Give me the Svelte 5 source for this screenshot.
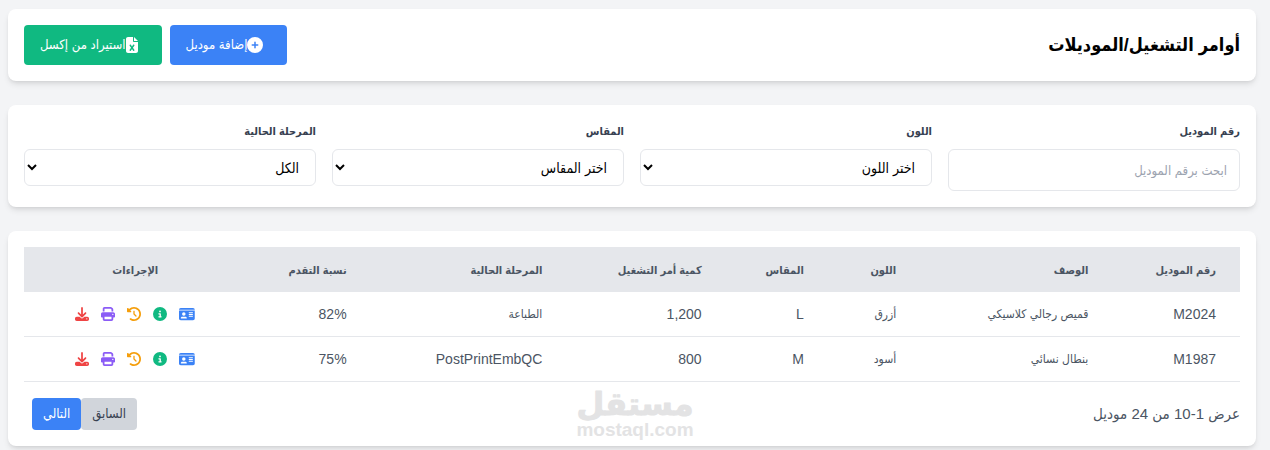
<script>
    const columns = [
        { label: "رقم الموديل", width: 10.5 },
        { label: "الوصف", width: 15.8 },
        { label: "اللون", width: 7.6 },
        { label: "المقاس", width: 8.4 },
        { label: "كمية أمر التشغيل", width: 13.1 },
        { label: "المرحلة الحالية", width: 16.1 },
        { label: "نسبة التقدم", width: 10.2 },
        { label: "الإجراءات", width: 18.3 },
    ];

    const orders = [
        {
            model: "M2024",
            description: "قميص رجالي كلاسيكي",
            color: "أزرق",
            size: "L",
            quantity: 1200,
            stage: "الطباعة",
            progress: 82,
        },
        {
            model: "M1987",
            description: "بنطال نسائي",
            color: "أسود",
            size: "M",
            quantity: 800,
            stage: "PostPrintEmbQC",
            progress: 75,
        },
    ];

    const actions = [
        {
            name: "details",
            label: "بطاقة الموديل",
            viewBox: "0 0 576 512",
            path: "M0 96l576 0c0-35.3-28.7-64-64-64H64C28.7 32 0 60.7 0 96zm0 32V416c0 35.3 28.7 64 64 64H512c35.3 0 64-28.7 64-64V128H0zM64 405.3c0-29.5 23.9-53.3 53.3-53.3H234.7c29.5 0 53.3 23.9 53.3 53.3c0 5.9-4.8 10.7-10.7 10.7H74.7c-5.9 0-10.7-4.8-10.7-10.7zM176 192a64 64 0 1 1 0 128 64 64 0 1 1 0-128zm176 16c0-8.8 7.2-16 16-16H496c8.8 0 16 7.2 16 16s-7.2 16-16 16H368c-8.8 0-16-7.2-16-16zm0 64c0-8.8 7.2-16 16-16H496c8.8 0 16 7.2 16 16s-7.2 16-16 16H368c-8.8 0-16-7.2-16-16zm0 64c0-8.8 7.2-16 16-16H496c8.8 0 16 7.2 16 16s-7.2 16-16 16H368c-8.8 0-16-7.2-16-16z",
        },
        {
            name: "info",
            label: "التفاصيل",
            viewBox: "0 0 512 512",
            path: "M256 512A256 256 0 1 0 256 0a256 256 0 1 0 0 512zM216 336h24V272H216c-13.3 0-24-10.7-24-24s10.7-24 24-24h48c13.3 0 24 10.7 24 24v88h8c13.3 0 24 10.7 24 24s-10.7 24-24 24H216c-13.3 0-24-10.7-24-24s10.7-24 24-24zm40-208a32 32 0 1 1 0 64 32 32 0 1 1 0-64z",
        },
        {
            name: "history",
            label: "السجل",
            viewBox: "0 0 512 512",
            path: "M75 75L41 41C25.9 25.9 0 36.6 0 57.9V168c0 13.3 10.7 24 24 24H134.1c21.4 0 32.1-25.9 17-41l-30.8-30.8C155 85.5 203 64 256 64c106 0 192 86 192 192s-86 192-192 192c-40.8 0-78.6-12.7-109.7-34.4c-14.5-10.1-34.4-6.6-44.6 7.9s-6.6 34.4 7.9 44.6C151.2 495 201.7 512 256 512c141.4 0 256-114.6 256-256S397.4 0 256 0C185.3 0 121.3 28.7 75 75zm181 53c-13.3 0-24 10.7-24 24V256c0 6.4 2.5 12.5 7 17l72 72c9.4 9.4 24.6 9.4 33.9 0s9.4-24.6 0-33.9l-65-65V152c0-13.3-10.7-24-24-24z",
        },
        {
            name: "print",
            label: "طباعة",
            viewBox: "0 0 512 512",
            path: "M128 0C92.7 0 64 28.7 64 64v96h64V64H354.7L384 93.3V160h64V93.3c0-17-6.7-33.3-18.7-45.3L400 18.7C388 6.7 371.7 0 354.7 0H128zM384 352v32 64H128V384 368 352H384zm64 32h32c17.7 0 32-14.3 32-32V256c0-35.3-28.7-64-64-64H64c-35.3 0-64 28.7-64 64v96c0 17.7 14.3 32 32 32H64v64c0 35.3 28.7 64 64 64H384c35.3 0 64-28.7 64-64V384zM432 248a24 24 0 1 1 0 48 24 24 0 1 1 0-48z",
        },
        {
            name: "download",
            label: "تنزيل",
            viewBox: "0 0 512 512",
            path: "M288 32c0-17.7-14.3-32-32-32s-32 14.3-32 32V274.7l-73.4-73.4c-12.5-12.5-32.8-12.5-45.3 0s-12.5 32.8 0 45.3l128 128c12.5 12.5 32.8 12.5 45.3 0l128-128c12.5-12.5 12.5-32.8 0-45.3s-32.8-12.5-45.3 0L288 274.7V32zM64 352c-35.3 0-64 28.7-64 64v32c0 35.3 28.7 64 64 64H448c35.3 0 64-28.7 64-64V416c0-35.3-28.7-64-64-64H346.5l-45.3 45.3c-25 25-65.5 25-90.5 0L165.5 352H64zm368 56a24 24 0 1 1 0 48 24 24 0 1 1 0-48z",
        },
    ];

    let search = $state("");
    let color = $state("");
    let size = $state("");
    let stage = $state("");

    const visible = $derived(
        orders.filter(
            (o) =>
                o.model.includes(search) &&
                (!color || o.color === color) &&
                (!size || o.size === size) &&
                (!stage || o.stage === stage),
        ),
    );

    const isArabic = (text) => /[\u0600-\u06ff]/.test(text);
</script>

<main class="page" dir="rtl">
    <header class="card header">
        <h1>أوامر التشغيل/الموديلات</h1>
        <div class="header-actions">
            <button class="btn btn-blue">
                <svg viewBox="0 0 512 512" width="16" height="16" aria-hidden="true">
                    <path
                        d="M256 512A256 256 0 1 0 256 0a256 256 0 1 0 0 512zM232 344V280H168c-13.3 0-24-10.7-24-24s10.7-24 24-24h64V168c0-13.3 10.7-24 24-24s24 10.7 24 24v64h64c13.3 0 24 10.7 24 24s-10.7 24-24 24H280v64c0 13.3-10.7 24-24 24s-24-10.7-24-24z"
                    ></path>
                </svg>
                <span>إضافة موديل</span>
            </button>
            <button class="btn btn-green">
                <svg viewBox="0 0 384 512" width="12" height="16" aria-hidden="true">
                    <path
                        d="M64 0C28.7 0 0 28.7 0 64V448c0 35.3 28.7 64 64 64H320c35.3 0 64-28.7 64-64V160H256c-17.7 0-32-14.3-32-32V0H64zM256 0V128H384L256 0zM155.7 250.2L192 302.1l36.3-51.9c7.6-10.9 22.6-13.5 33.4-5.9s13.5 22.6 5.9 33.4L221.3 344l46.4 66.2c7.6 10.9 5 25.8-5.9 33.4s-25.8 5-33.4-5.9L192 385.8l-36.3 51.9c-7.6 10.9-22.6 13.5-33.4 5.9s-13.5-22.6-5.9-33.4L162.7 344l-46.4-66.2c-7.6-10.9-5-25.8 5.9-33.4s25.8-5 33.4 5.9z"
                    ></path>
                </svg>
                <span>استيراد من إكسل</span>
            </button>
        </div>
    </header>

    <section class="card filters">
        <div class="field">
            <label for="search">رقم الموديل</label>
            <input id="search" type="text" placeholder="ابحث برقم الموديل" bind:value={search} />
        </div>
        <div class="field">
            <label for="color">اللون</label>
            <select id="color" bind:value={color}>
                <option value="">اختر اللون</option>
                <option value="أزرق">أزرق</option>
                <option value="أسود">أسود</option>
            </select>
        </div>
        <div class="field">
            <label for="size">المقاس</label>
            <select id="size" bind:value={size}>
                <option value="">اختر المقاس</option>
                <option value="M">M</option>
                <option value="L">L</option>
            </select>
        </div>
        <div class="field">
            <label for="stage">المرحلة الحالية</label>
            <select id="stage" bind:value={stage}>
                <option value="">الكل</option>
                <option value="الطباعة">الطباعة</option>
                <option value="PostPrintEmbQC">PostPrintEmbQC</option>
            </select>
        </div>
    </section>

    <section class="card">
        <table>
            <colgroup>
                {#each columns as column}
                    <col style:width="{column.width}%" />
                {/each}
            </colgroup>
            <thead>
                <tr>
                    {#each columns as column}
                        <th scope="col">{column.label}</th>
                    {/each}
                </tr>
            </thead>
            <tbody>
                {#each visible as order (order.model)}
                    <tr>
                        <td>{order.model}</td>
                        <td class="arabic">{order.description}</td>
                        <td class="arabic">{order.color}</td>
                        <td>{order.size}</td>
                        <td>{order.quantity.toLocaleString("en-US")}</td>
                        <td class:arabic={isArabic(order.stage)}>{order.stage}</td>
                        <td><bdi dir="ltr">{order.progress}%</bdi></td>
                        <td>
                            <div class="row-actions">
                                {#each actions as action}
                                    <button class="icon-btn {action.name}" aria-label={action.label}>
                                        <svg viewBox={action.viewBox} height="14" aria-hidden="true">
                                            <path d={action.path}></path>
                                        </svg>
                                    </button>
                                {/each}
                            </div>
                        </td>
                    </tr>
                {/each}
            </tbody>
        </table>

        <footer class="pagination">
            <span class="count">عرض 1-10 من 24 موديل</span>
            <div class="pager">
                <button class="page-btn prev">السابق</button>
                <button class="page-btn next">التالي</button>
            </div>
        </footer>
    </section>

    <svg class="watermark" viewBox="0 0 140 72" width="140" height="72" aria-hidden="true">
        <text class="mark-ar" x="70" y="41" text-anchor="middle">مستقل</text>
        <text class="mark-en" x="70" y="62" text-anchor="middle">mostaql.com</text>
    </svg>
</main>

<style>
    :global(body) {
        background: #f3f4f6;
    }

    .page,
    .page :is(button, input, select) {
        font-family: "Liberation Sans", "DejaVu Sans Condensed", "DejaVu Sans", sans-serif;
    }

    .page {
        position: relative;
        display: flex;
        flex-direction: column;
        gap: 24px;
        padding: 9px 14px 4px 8px;
        color: #000;
    }

    .card {
        padding: 16px;
        background: #fff;
        border-radius: 8px;
        box-shadow:
            0 4px 6px -1px rgba(0, 0, 0, 0.1),
            0 2px 4px -2px rgba(0, 0, 0, 0.1);
    }

    .header {
        display: flex;
        align-items: center;
        justify-content: space-between;
    }

    h1 {
        margin: 0;
        font-size: 18px;
        line-height: 28px;
        font-weight: 700;
    }

    .header-actions {
        display: flex;
        gap: 8px;
    }

    button {
        border: none;
        cursor: pointer;
    }

    svg {
        display: block;
        fill: currentColor;
    }

    .btn {
        display: flex;
        align-items: center;
        height: 40px;
        padding: 0 24px 0 16px;
        border-radius: 4px;
        color: #fff;
        font-size: 13px;
        line-height: 20px;
    }

    .btn-blue {
        background: #3b82f6;
    }

    .btn-green {
        background: #10b981;
    }

    .filters {
        display: grid;
        grid-template-columns: repeat(4, 1fr);
        align-items: start;
        gap: 16px;
    }

    .field {
        display: flex;
        flex-direction: column;
        gap: 8px;
    }

    label {
        color: #374151;
        font-size: 11px;
        line-height: 20px;
        font-weight: 700;
    }

    input,
    select {
        box-sizing: border-box;
        width: 100%;
        border: 1px solid #e5e7eb;
        border-radius: 6px;
        background: #fff;
        color: #000;
    }

    input {
        height: 42px;
        padding: 8px 12px;
        font-size: 13px;
    }

    input::placeholder {
        color: #9ca3af;
    }

    select {
        height: 37px;
        padding: 0 12px;
        font-size: 14px;
    }

    table {
        width: 100%;
        table-layout: fixed;
        border-collapse: separate;
        border-spacing: 0;
        color: #4b5563;
    }

    thead {
        background: #e5e7eb;
    }

    th,
    td {
        box-sizing: border-box;
        height: 45px;
        padding: 0 24px;
        text-align: right;
        white-space: nowrap;
        line-height: 20px;
    }

    th {
        font-size: 11px;
        font-weight: 700;
    }

    td {
        border-bottom: 1px solid #e5e7eb;
        font-size: 14px;
    }

    td.arabic {
        font-size: 12px;
    }

    th:last-child {
        text-align: center;
    }

    .row-actions {
        display: flex;
        justify-content: center;
        gap: 12px;
    }

    .icon-btn {
        padding: 0;
        background: none;
    }

    .details {
        color: #3b82f6;
    }

    .info {
        color: #10b981;
    }

    .history {
        color: #f59e0b;
    }

    .print {
        color: #8b5cf6;
    }

    .download {
        color: #ef4444;
    }

    .pagination {
        display: flex;
        align-items: center;
        justify-content: space-between;
        margin-top: 16px;
    }

    .count {
        color: #4b5563;
        font-size: 15px;
        line-height: 24px;
    }

    .pager {
        display: flex;
        padding-left: 8px;
    }

    .page-btn {
        height: 32px;
        padding: 0 11px;
        border-radius: 4px;
        font-size: 13px;
        line-height: 20px;
    }

    .prev {
        background: #d1d5db;
        color: #374151;
    }

    .next {
        background: #3b82f6;
        color: #fff;
    }

    .watermark {
        position: absolute;
        bottom: 4px;
        left: 50%;
        transform: translateX(-50%);
        fill: #e3e3e4;
        pointer-events: none;
    }

    .mark-ar {
        font-family: "DejaVu Sans", sans-serif;
        font-size: 32px;
        font-weight: 700;
        stroke: #e3e3e4;
        stroke-linejoin: round;
    }

    .mark-en {
        font-size: 19px;
        font-weight: 700;
    }
</style>
